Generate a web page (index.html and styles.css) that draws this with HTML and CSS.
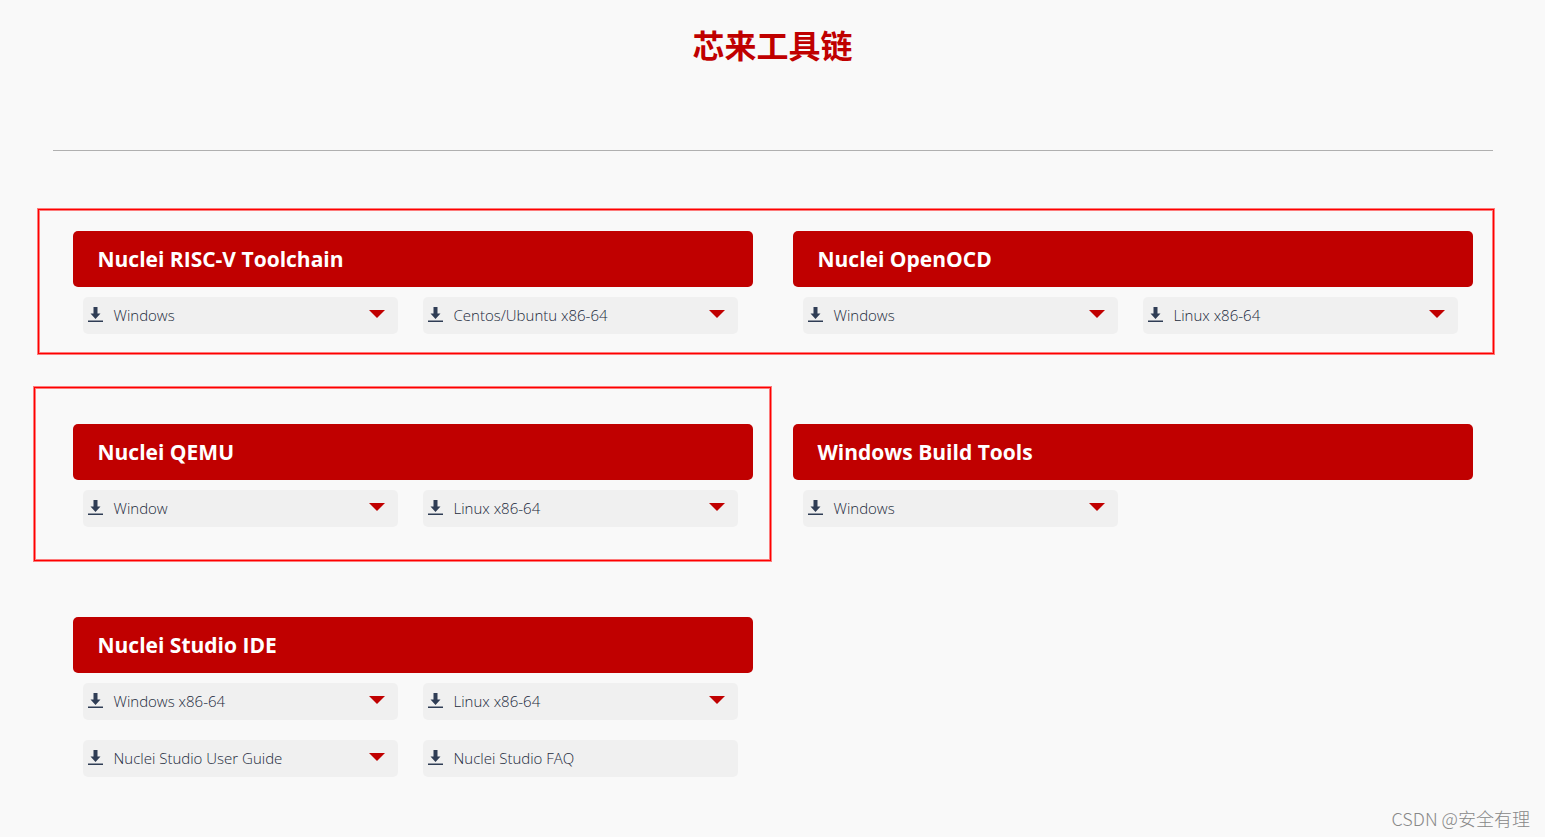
FILE: index.html
```html
<!DOCTYPE html>
<html lang="zh-CN">
<head>
<meta charset="utf-8">
<meta name="viewport" content="width=device-width, initial-scale=1">
<title>芯来工具链</title>
<link rel="stylesheet" href="styles.css">
</head>
<body>
<svg class="sprite" aria-hidden="true">
  <symbol id="download" viewBox="0 0 15 15">
    <path d="M5.5 0h4v6.5h3L7.5 12l-5-5.500h3z"/>
    <path d="M0 13.500h15V15H0z"/>
  </symbol>
  <symbol id="caret" viewBox="0 0 16 8">
    <path d="M0 0h16L8 8z"/>
  </symbol>
</svg>
<main class="page">
  <h1 class="title">芯来工具链</h1>
  <div class="tools">
    <section class="card">
      <h2 class="card-title">Nuclei RISC-V Toolchain</h2>
      <ul class="downloads">
        <li><button class="item" type="button"><svg class="icon"><use href="#download"/></svg><span class="label">Windows</span><svg class="caret"><use href="#caret"/></svg></button></li>
        <li><button class="item" type="button"><svg class="icon"><use href="#download"/></svg><span class="label">Centos/Ubuntu x86-64</span><svg class="caret"><use href="#caret"/></svg></button></li>
      </ul>
    </section>
    <section class="card">
      <h2 class="card-title">Nuclei OpenOCD</h2>
      <ul class="downloads">
        <li><button class="item" type="button"><svg class="icon"><use href="#download"/></svg><span class="label">Windows</span><svg class="caret"><use href="#caret"/></svg></button></li>
        <li><button class="item" type="button"><svg class="icon"><use href="#download"/></svg><span class="label">Linux x86-64</span><svg class="caret"><use href="#caret"/></svg></button></li>
      </ul>
    </section>
    <div class="mark mark-row"></div>
  </div>
  <div class="tools">
    <section class="card">
      <h2 class="card-title">Nuclei QEMU</h2>
      <ul class="downloads">
        <li><button class="item" type="button"><svg class="icon"><use href="#download"/></svg><span class="label">Window</span><svg class="caret"><use href="#caret"/></svg></button></li>
        <li><button class="item" type="button"><svg class="icon"><use href="#download"/></svg><span class="label">Linux x86-64</span><svg class="caret"><use href="#caret"/></svg></button></li>
      </ul>
    </section>
    <section class="card">
      <h2 class="card-title">Windows Build Tools</h2>
      <ul class="downloads">
        <li><button class="item" type="button"><svg class="icon"><use href="#download"/></svg><span class="label">Windows</span><svg class="caret"><use href="#caret"/></svg></button></li>
      </ul>
    </section>
    <div class="mark mark-half"></div>
  </div>
  <div class="tools">
    <section class="card">
      <h2 class="card-title">Nuclei Studio IDE</h2>
      <ul class="downloads">
        <li><button class="item" type="button"><svg class="icon"><use href="#download"/></svg><span class="label">Windows x86-64</span><svg class="caret"><use href="#caret"/></svg></button></li>
        <li><button class="item" type="button"><svg class="icon"><use href="#download"/></svg><span class="label">Linux x86-64</span><svg class="caret"><use href="#caret"/></svg></button></li>
        <li><button class="item" type="button"><svg class="icon"><use href="#download"/></svg><span class="label">Nuclei Studio User Guide</span><svg class="caret"><use href="#caret"/></svg></button></li>
        <li><a class="item" href="#faq"><svg class="icon"><use href="#download"/></svg><span class="label">Nuclei Studio FAQ</span></a></li>
      </ul>
    </section>
  </div>
</main>
<div class="watermark">CSDN @安全有理</div>
</body>
</html>
```
FILE: styles.css
```css
* {
  box-sizing: border-box;
}

body {
  position: relative;
  margin: 0;
  background: #f9f9f9;
  color: #2c3e50;
  font-family: "Open Sans", "Noto Sans CJK SC", sans-serif;
}

.sprite {
  position: absolute;
  width: 0;
  height: 0;
}

.page {
  max-width: 1440px;
  margin: 0 auto;
  padding-bottom: 50px;
}

.title {
  margin: 0 0 80px;
  padding: 22px 0 81px;
  border-bottom: 1px solid #b0b0b0;
  color: #c00000;
  font-size: 32px;
  font-weight: 700;
  line-height: 47px;
  text-align: center;
}

.tools {
  position: relative;
  display: grid;
  grid-template-columns: 1fr 1fr;
}

.tools + .tools {
  margin-top: 80px;
}

.card {
  padding: 0 20px;
}

.card-title {
  margin: 0;
  padding: 0 25px;
  border-radius: 5px;
  background: #c00000;
  color: #fff;
  font-size: 21px;
  font-weight: 700;
  line-height: 56px;
}

.downloads {
  display: grid;
  grid-template-columns: 1fr 1fr;
  margin: 0;
  padding: 0;
  list-style: none;
}

.downloads li {
  padding: 10px 15px 10px 10px;
}

.item {
  display: flex;
  align-items: center;
  gap: 11px;
  width: 100%;
  height: 37px;
  padding: 0 13px 2px 5px;
  border: 0;
  border-radius: 5px;
  background: #f0f0f0;
  color: #1c2a3c;
  font-family: "Open Sans", sans-serif;
  font-size: 15px;
  font-weight: 300;
  text-align: left;
  text-decoration: none;
  cursor: pointer;
}

.icon {
  flex: none;
  width: 15px;
  height: 15px;
  fill: #2f3d55;
}

.label {
  flex: 1;
}

.caret {
  flex: none;
  width: 16px;
  height: 8px;
  margin-bottom: 1px;
  fill: #c00000;
}

.mark {
  position: absolute;
  border: 1px solid #f00;
  box-shadow: 0 0 0 1px rgba(255, 0, 0, 0.5), inset 0 0 0 1px rgba(255, 0, 0, 0.5);
  pointer-events: none;
}

.mark-row {
  inset: -22px -1px -10px -15px;
}

.mark-half {
  inset: -37px calc(50% + 2px) -24px -19px;
}

.watermark {
  position: absolute;
  right: 15px;
  bottom: 6px;
  color: #888;
  font-family: "Noto Sans CJK SC", sans-serif;
  font-size: 18px;
  font-weight: 300;
  line-height: 26px;
}
```
